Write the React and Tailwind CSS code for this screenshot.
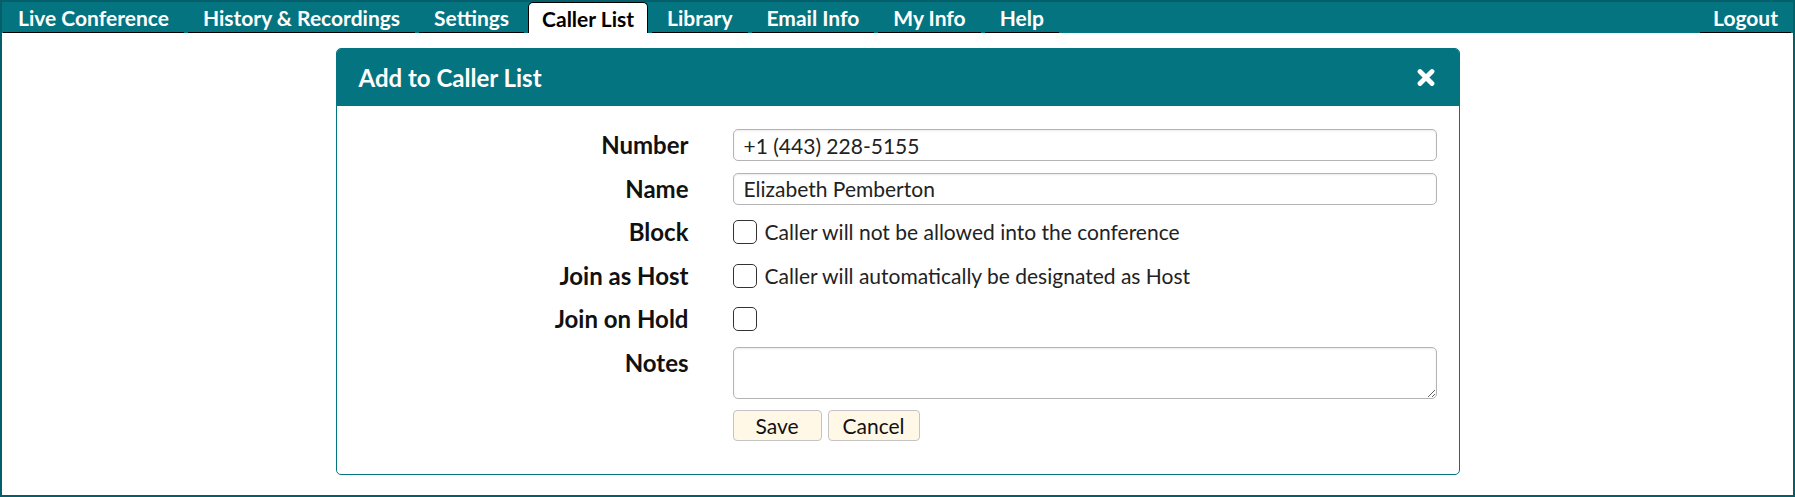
import { useState } from 'react';

const TABS = ['Live Conference', 'History & Recordings', 'Settings', 'Caller List', 'Library', 'Email Info', 'My Info', 'Help'];

const Label = ({ children }) => (
  <div className="flex h-[32px] items-center justify-end text-[24px] font-bold text-[#111]">{children}</div>
);

const Check = ({ text }) => (
  <label className="flex h-[32px] items-center gap-[8px] text-[21px] text-[#222]">
    <span className="block h-[24px] w-[24px] shrink-0 rounded-[5px] border-[1.5px] border-[#333] bg-white" />
    {text && <span>{text}</span>}
  </label>
);

const App = () => {
  const [active] = useState('Caller List');
  const [form, setForm] = useState({
    number: '+1 (443) 228-5155',
    name: 'Elizabeth Pemberton',
    notes: ''
  });

  return (
    <div className="box-border h-[497px] w-full border-2 border-[#045f6a] bg-white font-['Lato','Noto_Sans',sans-serif]">
      {/* Tab bar */}
      <nav className="flex h-[31px] items-stretch bg-[#047481] pl-px text-[21px] font-bold leading-none">
        {TABS.map((t) =>
          t === active ? (
            <div key={t} className="mr-[4px] flex items-center rounded-t-[5px] border border-b-0 border-black bg-white px-[13px] text-black">
              {t}
            </div>
          ) : (
            <div key={t} className="mr-[4px] flex items-center border-b border-black px-[15px] text-white">
              {t}
            </div>
          )
        )}
        <div className="ml-auto mr-[2px] flex items-center border-b border-black px-[13px] text-white">Logout</div>
      </nav>

      {/* Dialog */}
      <div className="mx-auto mt-[15px] w-[1124px] overflow-hidden rounded-[5px] border border-[#047481]">
        <div className="flex h-[57px] items-center justify-between bg-[#047481] pl-[22px] pr-[24px]">
          <h2 className="text-[24px] font-bold text-white">Add to Caller List</h2>
          <svg width="18" height="19" viewBox="0 0 18 19" className="text-white">
            <path d="M3 3.5 L15 15.5 M15 3.5 L3 15.5" stroke="currentColor" strokeWidth="4.8" strokeLinecap="round" />
          </svg>
        </div>

        <div className="grid grid-cols-[352px_704px] gap-x-[44px] gap-y-[11.5px] pb-[33px] pt-[23px]">
          <Label>Number</Label>
          <input
            type="text"
            value={form.number}
            onChange={(e) => setForm({ ...form, number: e.target.value })}
            className="h-[32px] rounded-[5px] border border-[#b4b4b4] px-[10px] text-[21px] text-[#222] shadow-[inset_0_1px_2px_rgba(0,0,0,0.08)] outline-none"
          />

          <Label>Name</Label>
          <input
            type="text"
            value={form.name}
            onChange={(e) => setForm({ ...form, name: e.target.value })}
            className="h-[32px] rounded-[5px] border border-[#b4b4b4] px-[10px] text-[21px] text-[#222] shadow-[inset_0_1px_2px_rgba(0,0,0,0.08)] outline-none"
          />

          <Label>Block</Label>
          <Check text="Caller will not be allowed into the conference" />

          <Label>Join as Host</Label>
          <Check text="Caller will automatically be designated as Host" />

          <Label>Join on Hold</Label>
          <Check />

          <Label>Notes</Label>
          <textarea
            value={form.notes}
            onChange={(e) => setForm({ ...form, notes: e.target.value })}
            className="h-[52px] rounded-[5px] border border-[#b4b4b4] px-[10px] py-[4px] text-[21px] shadow-[inset_0_1px_2px_rgba(0,0,0,0.08)] outline-none"
          />

          <div />
          <div className="flex gap-[6px]">
            <button className="h-[31px] min-w-[89px] rounded-[4px] border border-[#c4c4c4] bg-[#fff8e6] px-[14px] text-[21px] leading-none text-[#111]">Save</button>
            <button className="h-[31px] min-w-[89px] rounded-[4px] border border-[#c4c4c4] bg-[#fff8e6] px-[14px] text-[21px] leading-none text-[#111]">Cancel</button>
          </div>
        </div>
      </div>
    </div>
  );
};

export default App;
